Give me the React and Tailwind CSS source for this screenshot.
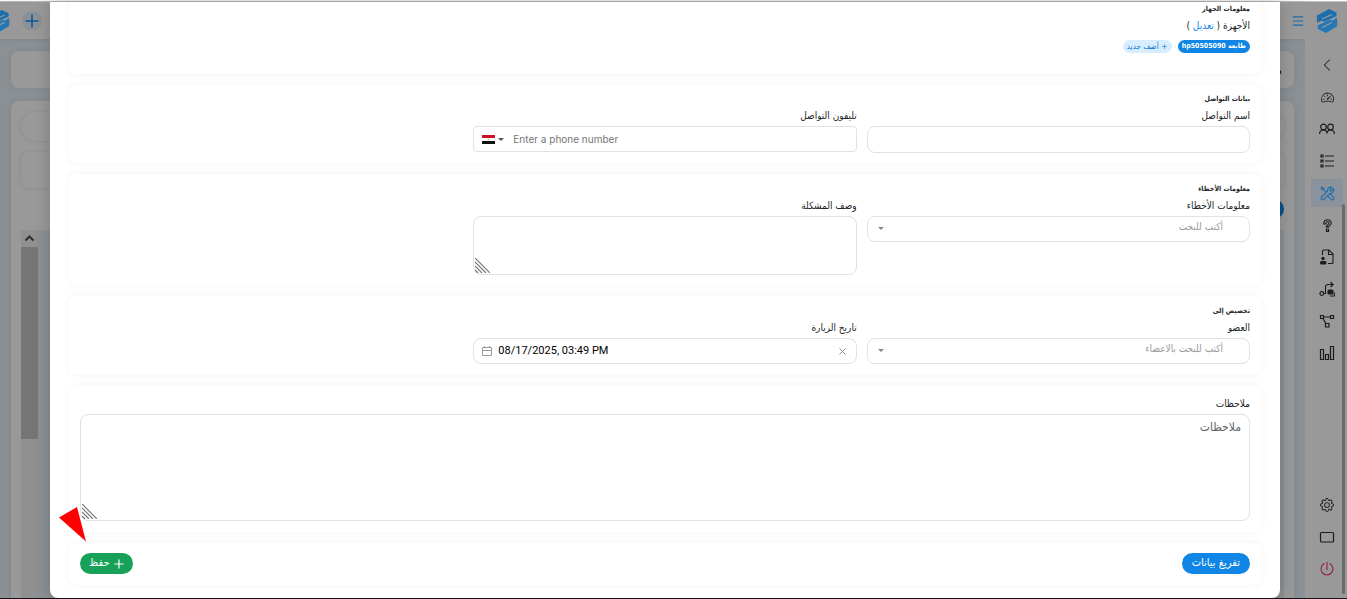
import { useState } from 'react';
import { BsChevronLeft, BsSpeedometer2, BsGear } from 'react-icons/bs';
import { LiaToolsSolid, LiaQuestionSolid } from 'react-icons/lia';
import { Plus, Menu, X } from 'lucide-react';

const CARD = 'bg-white rounded-lg shadow-[0_0_8px_rgba(0,0,0,0.05)] px-[11px]';
const FIELD = 'block w-full bg-white border border-[#dee2e6] rounded-lg outline-none focus:border-[#0f85e5]';

function Logo({ className }) {
    return (
        <svg viewBox="0 0 24 26" className={className} fill="none">
            <path d="M1.5 8 L1.5 13 M22.5 13 L22.5 18" stroke="#a08c80" strokeWidth="2" />
            <path d="M2 7.5 L14 1 L21.5 4.5 L21.5 8 L9 14 L7 12.5 L2 15Z" fill="#1c6fae" />
            <path d="M22 9.5 L22 18.5 L11 25 L3 21 L2.5 17.5 L15.5 11.5 L17 13Z" fill="#2377b5" />
            <path d="M7 11 L17 6.5 M7 19.5 L17 14.5" stroke="#999" strokeWidth="1.3" />
        </svg>
    );
}

function PeopleIcon() {
    return (
        <svg width="16" height="16" viewBox="0 0 16 16" fill="none" stroke="currentColor" strokeWidth="1.2">
            <circle cx="4.5" cy="6" r="2.8" />
            <circle cx="11.5" cy="6" r="2.8" />
            <path d="M.6 13c0-2.5 1.3-4 3.900-4 1.800 0 3 .9 3.500 2.500.5-1.600 1.700-2.500 3.500-2.500 2.600 0 3.900 1.500 3.900 4" />
        </svg>
    );
}

function ListIcon() {
    return (
        <svg width="16" height="16" viewBox="0 0 16 16" fill="none" stroke="currentColor" strokeWidth="1.2">
            <path d="M2 2h2v2H2z M2 7h2v2H2z M2 12h2v2H2z" />
            <path d="M6 3h9M6 8h9M6 13h9" />
        </svg>
    );
}

function FileUserIcon() {
    return (
        <svg width="16" height="16" viewBox="0 0 16 16" fill="none">
            <path d="M3.500 6V2.500a1.500 1.500 0 0 1 1.500-1.500h5l4 4v8.500a1 1 0 0 1-1 1H9M9.500 1v4.500H14" stroke="currentColor" strokeWidth="1.1" />
            <circle cx="4" cy="9.500" r="1.700" fill="currentColor" />
            <rect x="1" y="12" width="6.500" height="3.500" rx="1.600" fill="currentColor" />
        </svg>
    );
}

function RouteIcon() {
    return (
        <svg width="16" height="16" viewBox="0 0 16 16" fill="none" stroke="currentColor" strokeWidth="1.1">
            <circle cx="2.800" cy="12.500" r="1.900" />
            <path d="M4.700 12.500H6.500V6a2.500 2.500 0 0 1 2.500-2.500h5M11.500 1l2.700 2.500-2.700 2.500" />
            <rect x="9" y="9" width="5" height="4" rx="1" fill="currentColor" />
            <path d="M11 15h4.500v-3.500" />
        </svg>
    );
}

function WorkflowIcon() {
    return (
        <svg width="16" height="16" viewBox="0 0 16 16" fill="none" stroke="currentColor" strokeWidth="1.2">
            <path d="M1.500 2.500h3v3h-3zM11.500 2.500h3v3h-3zM6.500 10.500h3.500v3.500H6.500zM4.500 4h7M3.800 5.500l3.200 5" />
        </svg>
    );
}

function ChartIcon() {
    return (
        <svg width="16" height="16" viewBox="0 0 16 16" fill="none" stroke="currentColor" strokeWidth="1.2">
            <path d="M1.500 4.500h3v10h-3zM6.500 9.500h3v5h-3zM11.500 1.500h3v13h-3z" />
        </svg>
    );
}

function ScreenIcon() {
    return (
        <svg width="16" height="16" viewBox="0 0 16 16" fill="none" stroke="currentColor" strokeWidth="1.2">
            <rect x="1.5" y="3.5" width="13" height="9.5" rx="1" />
        </svg>
    );
}

function PowerIcon() {
    return (
        <svg width="16" height="16" viewBox="0 0 16 16" fill="none" stroke="currentColor" strokeWidth="1.1">
            <path d="M8 1v8M5.500 2.500a6 6 0 1 0 5 0" />
        </svg>
    );
}

const MENU = [
    { name: 'collapse', icon: <BsChevronLeft size={14} /> },
    { name: 'dashboard', icon: <BsSpeedometer2 size={13} /> },
    { name: 'customers', icon: <PeopleIcon /> },
    { name: 'lists', icon: <ListIcon /> },
    { name: 'maintenance', icon: <LiaToolsSolid size={17} />, active: true },
    { name: 'help', icon: <LiaQuestionSolid size={17} /> },
    { name: 'contracts', icon: <FileUserIcon /> },
    { name: 'routes', icon: <RouteIcon /> },
    { name: 'workflow', icon: <WorkflowIcon /> },
    { name: 'reports', icon: <ChartIcon /> },
];

function Sidebar() {
    return (
        <aside className="relative w-[42px] shrink-0 pl-0.5 bg-[#999] flex flex-col items-center text-[#1c1c1c]">
            <Logo className="w-6 h-[26px] mt-1.5 mb-[17px]" />
            <nav className="flex flex-col gap-1">
                {MENU.map((item) => (
                    <a
                        key={item.name}
                        href="#"
                        aria-label={item.name}
                        className={`flex items-center justify-center w-8 h-7 rounded-xs ${item.active ? 'bg-[#8a939d] text-[#1b6cab]' : ''}`}
                    >
                        {item.icon}
                    </a>
                ))}
            </nav>
            <div className="mt-auto mb-[15px] flex flex-col gap-1">
                <a href="#" aria-label="settings" className="flex items-center justify-center w-8 h-7"><BsGear size={14} /></a>
                <a href="#" aria-label="screen" className="flex items-center justify-center w-8 h-7"><ScreenIcon /></a>
                <a href="#" aria-label="logout" className="flex items-center justify-center w-8 h-7 text-[#94203f]"><PowerIcon /></a>
            </div>
            {/* scroll thumb */}
            <div className="absolute right-0.5 top-[202px] bottom-1 w-[3px] rounded-full bg-[#6a6a6a]" />
        </aside>
    );
}

function PageBehind() {
    return (
        <div className="flex-1 min-w-0 flex flex-col bg-[#8b9094]">
            <header className="h-[37px] shrink-0 bg-[#999] flex items-center justify-between shadow-[0_0_6px_rgba(0,0,0,0.1)]">
                <button type="button" aria-label="menu" className="text-[#1b6cab]"><Menu size={14} strokeWidth={2} /></button>
                <div className="flex items-center gap-[11px]">
                    <button type="button" aria-label="add" className="w-5 h-5 rounded-full bg-[#8b9094] text-[#0f5a98] flex items-center justify-center">
                        <Plus size={20} strokeWidth={2} />
                    </button>
                    <Logo className="w-[22px] h-6 -ml-[11px]" />
                </div>
            </header>
            <div className="flex-1 flex flex-col gap-[13px] px-[11px] pt-3">
                <div className="h-[37px] rounded-lg bg-[#999] pr-3 flex items-center text-xs text-black shadow-[0_0_6px_rgba(0,0,0,0.08)]">م</div>
                <div className="flex-1 rounded-t-lg bg-[#999] px-2.5 pt-[11px] flex flex-col shadow-[0_0_6px_rgba(0,0,0,0.08)]">
                    <div className="h-[29px] rounded-full shadow-[0_0_4px_rgba(0,0,0,0.1)]" />
                    <div className="h-9 mt-[11px] rounded-lg shadow-[0_0_4px_rgba(0,0,0,0.1)]" />
                    <div className="h-5 mt-[11px] w-8 rounded-full bg-[#09508a]" />
                    <div className="flex-1 mt-[11px] flex bg-[#8b9094]">
                        <div className="flex-1" />
                        <div className="w-[17px] bg-[#909090] flex flex-col items-center">
                            <svg width="17" height="17" viewBox="0 0 17 17" fill="none" stroke="#303030" strokeWidth="2">
                                <path d="M4.500 10.500l4-4 4 4" />
                            </svg>
                            <div className="w-full h-48 bg-[#757575]" />
                        </div>
                    </div>
                </div>
            </div>
        </div>
    );
}

function SectionTitle({ children }) {
    return <h3 className="text-[7px] leading-4 font-bold text-[#212529]">{children}</h3>;
}

function Label({ htmlFor, children }) {
    return <label htmlFor={htmlFor} className="block text-[10px] leading-[18px] mb-px text-[#212529]">{children}</label>;
}

function Caret({ className }) {
    return (
        <svg width="6" height="3" viewBox="0 0 6 3" className={className}>
            <path d="M0 0h6L3 3z" fill="currentColor" />
        </svg>
    );
}

function SearchSelect({ id, placeholder }) {
    return (
        <div className="relative">
            <select id={id} className={`${FIELD} h-[26px] appearance-none pr-[26px] pl-6 pb-1.5 text-[10px] text-[#999]`}>
                <option>{placeholder}</option>
            </select>
            <Caret className="absolute left-[11px] top-[11px] text-[#888] pointer-events-none" />
        </div>
    );
}

function Grip() {
    return (
        <svg width="15" height="15" viewBox="0 0 15 15" className="absolute left-0.5 bottom-0.5 pointer-events-none" stroke="#777" strokeWidth="1.2">
            <path d="M0 0l15 15M0 4l11 11M0 8l7 7M0 12l3 3" />
        </svg>
    );
}

function Egypt() {
    return (
        <svg width="13" height="9" viewBox="0 0 13 9">
            <path fill="#ce1126" d="M0 0h13v3H0z" />
            <path fill="#fff" d="M0 3h13v3H0z" />
            <path fill="#111" d="M0 6h13v3H0z" />
            <path fill="#e3cf96" d="M5.500 3.500h2v2h-2z" />
        </svg>
    );
}

export default function App() {
    const [date, setDate] = useState('08/17/2025, 03:49 PM');
    const [phone, setPhone] = useState('');
    const [contact, setContact] = useState('');
    const [problem, setProblem] = useState('');
    const [notes, setNotes] = useState('');

    const clearForm = () => {
        setDate('');
        setPhone('');
        setContact('');
        setProblem('');
        setNotes('');
    };

    return (
        <div dir="rtl" className="h-screen flex flex-col overflow-hidden bg-[#15171c] font-['DejaVu_Sans_Condensed','DejaVu_Sans',sans-serif]">
            <div className="h-0.5 shrink-0 bg-white border-b border-[#bdbfc0]" />
            <div className="relative flex-1 min-h-0 mb-px flex">
                <Sidebar />
                <PageBehind />

                {/* Modal */}
                <div className="absolute inset-0 pl-[50px] pr-[67px]">
                    <div role="dialog" className="h-full overflow-hidden flex flex-col justify-end gap-[11px] bg-white rounded-b-lg px-[19px] pb-[13px] shadow-[0_0_16px_rgba(0,0,0,0.2)]">
                        <section className={`${CARD} pb-[21px]`}>
                            <SectionTitle>معلومات الجهاز</SectionTitle>
                            <p className="text-[10px] leading-[18px] text-[#212529]">
                                الأجهزة ( <a href="#" className="text-[#0f85e5]">تعديل</a> )
                            </p>
                            <div className="flex gap-1.5 mt-[5px]">
                                <span className="h-[13px] px-1 rounded-full bg-[#0f85e5] text-white text-[7px] leading-3 font-bold">طابعه hp50505090</span>
                                <button type="button" className="h-[13px] px-1 rounded-full bg-[#d8edff] text-[#0f75cf] text-[8px] leading-3 flex items-center gap-0.5">
                                    <Plus size={7} strokeWidth={2} /> أضف جديد
                                </button>
                            </div>
                        </section>

                        <section className={`${CARD} pt-1.5 pb-2.5`}>
                            <SectionTitle>بيانات التواصل</SectionTitle>
                            <div className="grid grid-cols-3 gap-x-2.5">
                                <div>
                                    <Label htmlFor="contact">اسم التواصل</Label>
                                    <input id="contact" value={contact} onChange={(e) => setContact(e.target.value)} className={`${FIELD} h-[27px] px-2 text-[11px]`} />
                                </div>
                                <div>
                                    <Label htmlFor="phone">تليفون التواصل</Label>
                                    <div dir="ltr" className="h-[26px] flex items-center border border-[#dee2e6] rounded-sm">
                                        <button type="button" aria-label="country" className="pl-2 pr-[9px] h-full flex items-center gap-[3px] text-[#555]">
                                            <Egypt />
                                            <Caret />
                                        </button>
                                        <input
                                            id="phone"
                                            type="tel"
                                            placeholder="Enter a phone number"
                                            value={phone}
                                            onChange={(e) => setPhone(e.target.value)}
                                            className="flex-1 min-w-0 outline-none font-[Inter,sans-serif] text-[10px] placeholder:text-[#757575]"
                                        />
                                    </div>
                                </div>
                            </div>
                        </section>

                        <section className={`${CARD} pt-[7px] pb-2.5`}>
                            <SectionTitle>معلومات الأخطاء</SectionTitle>
                            <div className="grid grid-cols-3 gap-x-2.5">
                                <div>
                                    <Label htmlFor="errors">معلومات الأخطاء</Label>
                                    <SearchSelect id="errors" placeholder="أكتب للبحث" />
                                </div>
                                <div>
                                    <Label htmlFor="problem">وصف المشكلة</Label>
                                    <div className="relative">
                                        <textarea id="problem" value={problem} onChange={(e) => setProblem(e.target.value)} className={`${FIELD} h-[59px] resize-none px-2 py-1 text-[11px]`} />
                                        <Grip />
                                    </div>
                                </div>
                            </div>
                        </section>

                        <section className={`${CARD} pt-[7px] pb-[11px]`}>
                            <SectionTitle>تخصيص إلى</SectionTitle>
                            <div className="grid grid-cols-3 gap-x-2.5">
                                <div>
                                    <Label htmlFor="member">العضو</Label>
                                    <SearchSelect id="member" placeholder="أكتب للبحث بالاعضاء" />
                                </div>
                                <div>
                                    <Label htmlFor="visit">تاريخ الزيارة</Label>
                                    <div dir="ltr" className={`${FIELD} h-[26px] flex items-center gap-1.5 px-2`}>
                                        <svg width="10" height="10" viewBox="0 0 10 10" fill="none" stroke="#999">
                                            <path d="M.5 1.500h9v8h-9zM.5 4.500h9M2.500 0v2M7.500 0v2" />
                                        </svg>
                                        <input id="visit" value={date} onChange={(e) => setDate(e.target.value)} className="flex-1 min-w-0 outline-none font-[Roboto,sans-serif] text-[11px] text-black" />
                                        <button type="button" aria-label="clear" onClick={() => setDate('')} className="text-[#888]"><X size={11} strokeWidth={2} /></button>
                                    </div>
                                </div>
                            </div>
                        </section>

                        <section className={`${CARD} pt-[9px] pb-[11px]`}>
                            <Label htmlFor="notes">ملاحظات</Label>
                            <div className="relative">
                                <textarea id="notes" placeholder="ملاحظات" value={notes} onChange={(e) => setNotes(e.target.value)} className={`${FIELD} h-[107px] resize-none px-2 py-1 text-xs placeholder:text-[#5f6368]`} />
                                <Grip />
                            </div>
                        </section>

                        <section className={`${CARD} pt-2.5 pb-[11px] flex items-center justify-between`}>
                            <button type="button" onClick={clearForm} className="h-[21px] px-2.5 rounded-full bg-[#0f85e5] text-white text-[11px]">تفريغ بيانات</button>
                            <button type="button" className="relative h-[21px] pl-[9px] pr-[7px] rounded-full bg-[#17a058] text-white text-[11px] flex items-center gap-0.5">
                                <Plus size={14} strokeWidth={2} /> حفظ
                                <svg width="28" height="35" viewBox="0 0 28 35" className="absolute -left-[21px] bottom-8 pointer-events-none">
                                    <path d="M0 10.500L18 0l9 34.500z" fill="#f00" />
                                </svg>
                            </button>
                        </section>
                    </div>
                </div>
            </div>
        </div>
    );
}
